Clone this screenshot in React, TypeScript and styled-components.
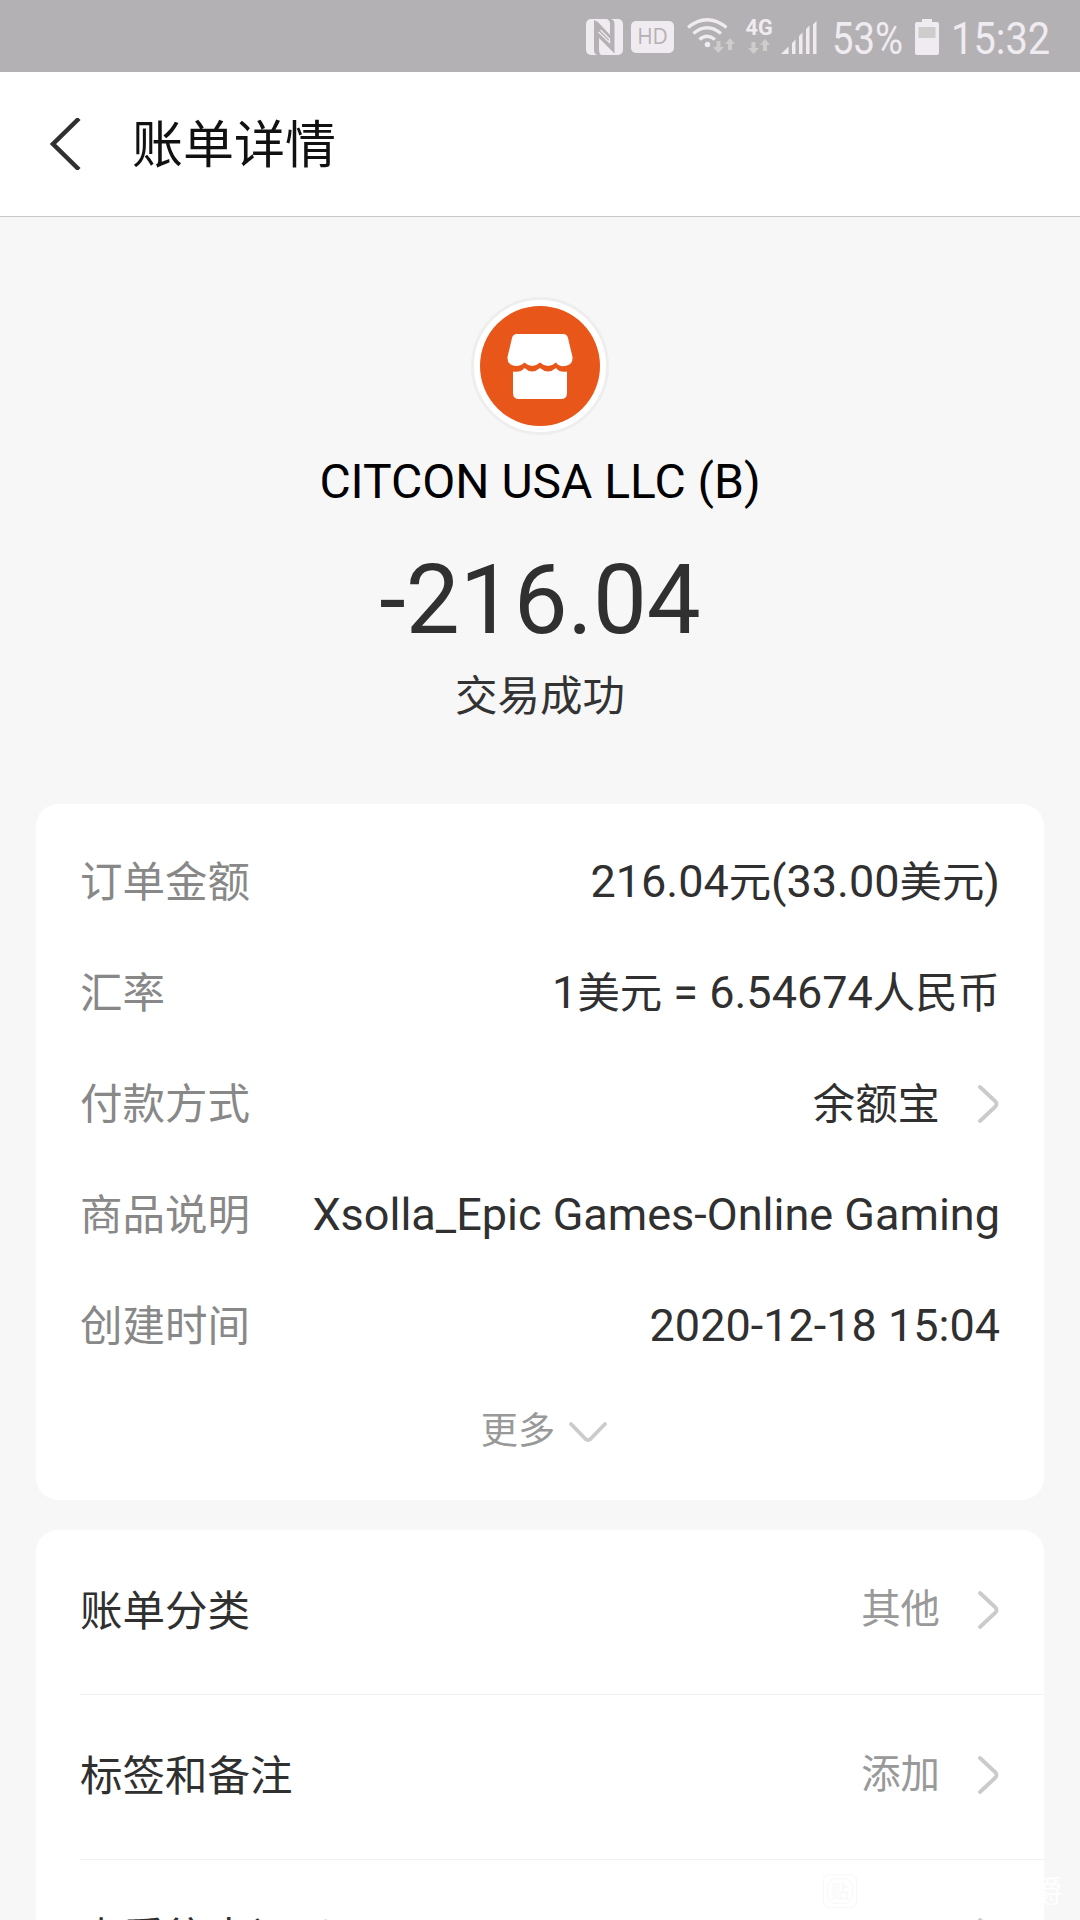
import React from 'react';
import styled, { createGlobalStyle } from 'styled-components';

const GlobalStyle = createGlobalStyle`
  * { box-sizing: border-box; }
  html, body { margin: 0; padding: 0; overflow: hidden; }
  body { background: #f7f7f7; font-family: Roboto, "Noto Sans CJK SC", sans-serif; }
`;

const Screen = styled.div`
  position: relative;
  width: 1080px;
  height: 1920px;
  overflow: hidden;
  display: flex;
  flex-direction: column;
  background: #f7f7f7;
`;

const StatusBar = styled.div`
  flex: none;
  height: 72px;
  display: flex;
  justify-content: flex-end;
  align-items: flex-start;
  padding: 18px 31px 0 0;
  background: #b4b1b4;
  color: #f0ebf0;
`;

const StatusIcon = styled.svg<{ $gap?: number; $drop?: number }>`
  flex: none;
  display: block;
  margin-left: ${(p) => p.$gap ?? 0}px;
  margin-top: ${(p) => p.$drop ?? 0}px;
`;

const HdBadge = styled.div`
  width: 43px;
  height: 32px;
  margin: 3px 0 0 8px;
  border-radius: 5px;
  background: #f0ebf0;
  color: #b4b1b4;
  font: 400 21px/31px "Open Sans", sans-serif;
  text-align: center;
`;

const Network = styled.div`
  width: 28px;
  margin-left: 10px;
  display: flex;
  flex-direction: column;
  align-items: center;
`;

const NetworkName = styled.span`
  font: 700 22.5px/18px Roboto, sans-serif;
  transform: scaleX(0.96);
`;

const StatusText = styled.div<{ $width: number; $gap: number; $scale: number }>`
  width: ${(p) => p.$width}px;
  margin-left: ${(p) => p.$gap}px;
  font: 400 45px/42px Roboto, sans-serif;
  white-space: nowrap;
  transform: scaleX(${(p) => p.$scale});
  transform-origin: left center;
`;

const Header = styled.header`
  flex: none;
  height: 145px;
  display: flex;
  align-items: center;
  padding: 0 0 0 49px;
  background: #fff;
  border-bottom: 1px solid #c8c8c8;
`;

const BackIcon = styled.svg`
  display: block;
  margin-bottom: 1px;
`;

const Title = styled.h1`
  margin: 0 0 0 51px;
  padding-top: 3px;
  font-weight: 400;
  font-size: 51px;
  line-height: 72px;
  color: #111;
`;

const Summary = styled.section`
  flex: none;
  height: 587px;
  display: flex;
  flex-direction: column;
  align-items: center;
  padding-top: 80px;
`;

const Avatar = styled.div`
  width: 138px;
  height: 138px;
  border: 3px solid #eee;
  border-radius: 50%;
  padding: 6px;
  background: #fff;
`;

const Merchant = styled.div`
  margin-top: 17px;
  font-size: 48px;
  line-height: 60px;
  color: #000;
`;

const Amount = styled.div`
  margin-top: 32px;
  font-size: 96px;
  line-height: 112px;
  color: #303030;
`;

const State = styled.div`
  margin-top: 11px;
  font-size: 42.5px;
  line-height: 60px;
  color: #333;
`;

const Card = styled.section`
  flex: none;
  margin: 0 36px 30px;
  border-radius: 22px;
  background: #fff;
`;

const Details = styled(Card)`
  height: 696px;
  padding: 22px 44px 0;
`;

const DetailRow = styled.div`
  height: 111px;
  display: flex;
  align-items: center;
  justify-content: space-between;
  white-space: nowrap;
`;

const Label = styled.span`
  padding-top: 2px;
  font-size: 42.5px;
  line-height: 60px;
  color: #888;
`;

const Value = styled.span`
  display: flex;
  align-items: center;
  font-size: 45px;
  line-height: 60px;
  color: #303030;
`;

const Han = styled.span`
  font-family: "Noto Sans CJK SC", sans-serif;
  font-size: 42.4px;
  line-height: 1;
`;

const More = styled.div`
  height: 97px;
  display: flex;
  justify-content: center;
  align-items: center;
  padding: 0 0 3px 8px;
  gap: 14px;
  font-size: 37.2px;
  color: #999;

  svg {
    margin-top: 8px;
  }
`;

const Options = styled(Card)`
  padding-left: 44px;
`;

const OptionRow = styled.div<{ $raise?: number }>`
  height: 165px;
  display: flex;
  align-items: center;
  justify-content: space-between;
  padding: 0 44px ${(p) => 4 + (p.$raise ?? 0)}px 0;
  border-bottom: 1px solid #f2f2f2;
`;

const OptionLabel = styled(Label)`
  padding-top: 4px;
  color: #303030;
`;

const OptionValue = styled.span`
  display: flex;
  align-items: center;
  font-size: 39.4px;
  line-height: 60px;
  color: #999;
`;

const Arrow = styled.svg`
  display: block;
  margin-left: 37px;
  margin-right: 1px;
`;

const Watermark = styled.div`
  position: absolute;
  left: 823px;
  top: 1874px;
  width: 240px;
  height: 34px;
  display: flex;
  justify-content: space-between;
  align-items: center;
  font: 400 30px/30px "Noto Sans CJK SC", sans-serif;
  color: #fff;
`;

const WatermarkName = styled.span`
  padding-bottom: 5px;
`;

const WatermarkLogo = styled.div`
  width: 34px;
  height: 34px;
  padding: 2px;
  border: 1px solid #f8f8f8;
  border-radius: 6px;
`;

const WatermarkGlyph = styled.div`
  width: 26px;
  height: 26px;
  margin: 1px;
  border: 1px solid #f8f8f8;
  border-radius: 9px;
  font-size: 18px;
  line-height: 23px;
  text-align: center;
  color: #f8f8f8;
`;

const Chevron = () => (
  <Arrow width="22" height="40" viewBox="0 0 22 40" fill="none" stroke="#cbcbcb" strokeWidth="3.8" strokeLinecap="round" strokeLinejoin="round">
    <path d="M3 3 L18.5 17.5 Q20.5 20 18.5 22.5 L3 37" />
  </Arrow>
);

const Shop = () => (
  <svg width="120" height="120" viewBox="0 0 120 120" display="block">
    <circle cx="60" cy="60" r="60" fill="#e8561a" />
    <path
      fill="#fff"
      d="M37 28 H83 Q87 28 88 32 L92.500 51 Q93 58 87 59.500 Q80 62 76 56.500 Q68 63.500 60 56.500 Q52 63.500 44.500 56.500 Q40 61 33 59.500 Q27 58 27.500 51 L32 32 Q33 28 37 28 Z"
    />
    <path
      fill="#fff"
      d="M33 65.500 Q40 67 44.500 62 Q52 69 60 62 Q68 69 76 62 Q80 67 87 65.500 V87 Q87 93 81 93 H39 Q33 93 33 87 Z"
    />
  </svg>
);

const Arrows = ({ x, y }: { x: number; y: number }) => (
  <g transform={`translate(${x} ${y})`} fill="#cdcdcb">
    <path d="M3.500 3 H7.500 V9 H11 L5.500 15 L0 9 H3.500 Z" />
    <path d="M17 0 L22 6 H19 V12 H15 V6 H12 Z" />
  </g>
);

const rows: { label: string; value: React.ReactNode; link?: boolean }[] = [
  { label: '订单金额', value: <>216.04<Han>元</Han>(33.00<Han>美元</Han>)</> },
  { label: '汇率', value: <>1<Han>美元</Han> = 6.54674<Han>人民币</Han></> },
  { label: '付款方式', value: <Han>余额宝</Han>, link: true },
  { label: '商品说明', value: 'Xsolla_Epic Games-Online Gaming' },
  { label: '创建时间', value: '2020-12-18 15:04' },
];

const options = [
  { label: '账单分类', value: '其他' },
  { label: '标签和备注', value: '添加' },
  { label: '查看往来记录', value: '', raise: 7 },
];

export default function App() {
  return (
    <Screen>
      <GlobalStyle />
      <StatusBar>
        <StatusIcon width="37" height="37" viewBox="0 0 37 37" $drop={1}>
          <rect width="37" height="36" rx="5" fill="#f0ebf0" />
          <path d="M8 1 L12 3 L24 16 V5 Q24 1.500 21 0 H25 Q28.500 1 28.500 5 V34.500 L13 19 V31 Q13 34.500 15 36 H11 Q8 35 8 31 Z" fill="#b4b1b4" />
          <path d="M12.500 13 L23.500 23.500 V20 L14.500 11" fill="none" stroke="#f0ebf0" strokeWidth="1.300" />
        </StatusIcon>
        <HdBadge>HD</HdBadge>
        <StatusIcon width="48" height="37" viewBox="0 0 48 37" $gap={13}>
          <g fill="none" stroke="#f0ebf0" strokeWidth="3.200">
            <path d="M1 9.500 Q20 -6 39.500 9.500" />
            <path d="M6.500 15.500 Q20 4 34 15.500" />
            <path d="M12.500 21.500 Q20 15 28 21.500" />
          </g>
          <circle cx="20.500" cy="26.500" r="2.800" fill="#f0ebf0" />
          <Arrows x={26} y={20} />
        </StatusIcon>
        <Network>
          <NetworkName>4G</NetworkName>
          <StatusIcon width="22" height="16" viewBox="0 0 22 16" $drop={3}>
            <Arrows x={0} y={0} />
          </StatusIcon>
        </Network>
        <StatusIcon width="36" height="36" viewBox="0 0 36 36" $gap={8} fill="#f0ebf0">
          <path d="M0 36 L7.500 28.500 V36 Z M11 36 V25 L14.500 21.500 V36 Z M18 36 V18 L21.500 14.500 V36 Z M25 36 V11 L28.500 7.500 V36 Z M32 36 V6.500 L35.500 3 V36 Z" />
        </StatusIcon>
        <StatusText $width={68} $gap={15} $scale={0.85}>53%</StatusText>
        <StatusIcon width="24" height="37" viewBox="0 0 24 37" $gap={15}>
          <path d="M7 1 H17 V4 H22 Q24 4 24 6 V35 Q24 37 22 37 H2 Q0 37 0 35 V6 Q0 4 2 4 H7 Z" fill="#f0ebf0" />
          <rect x="3.500" y="9" width="17" height="11" fill="#cdcdcb" />
        </StatusIcon>
        <StatusText $width={98} $gap={12} $scale={0.885}>15:32</StatusText>
      </StatusBar>

      <Header>
        <BackIcon width="32" height="52" viewBox="0 0 32 52" fill="none" stroke="#303030" strokeWidth="4.5">
          <path d="M30 0.5 L4 26 L30 51.5" />
        </BackIcon>
        <Title>账单详情</Title>
      </Header>

      <Summary>
        <Avatar><Shop /></Avatar>
        <Merchant>CITCON USA LLC (B)</Merchant>
        <Amount>-216.04</Amount>
        <State>交易成功</State>
      </Summary>

      <Details>
        {rows.map((row) => (
          <DetailRow key={row.label}>
            <Label>{row.label}</Label>
            <Value>
              <div>{row.value}</div>
              {row.link && <Chevron />}
            </Value>
          </DetailRow>
        ))}
        <More>
          更多
          <svg width="38" height="22" viewBox="0 0 38 22" fill="none" stroke="#cbcbcb" strokeWidth="3.8" strokeLinecap="round" strokeLinejoin="round">
            <path d="M2 3 L16.500 18 Q19 20 21.500 18 L36 3" />
          </svg>
        </More>
      </Details>

      <Options>
        {options.map((option) => (
          <OptionRow key={option.label} $raise={option.raise}>
            <OptionLabel>{option.label}</OptionLabel>
            <OptionValue>
              {option.value}
              <Chevron />
            </OptionValue>
          </OptionRow>
        ))}
      </Options>

      <Watermark>
        <WatermarkLogo>
          <WatermarkGlyph>贴</WatermarkGlyph>
        </WatermarkLogo>
        <WatermarkName>爵</WatermarkName>
      </Watermark>
    </Screen>
  );
}
